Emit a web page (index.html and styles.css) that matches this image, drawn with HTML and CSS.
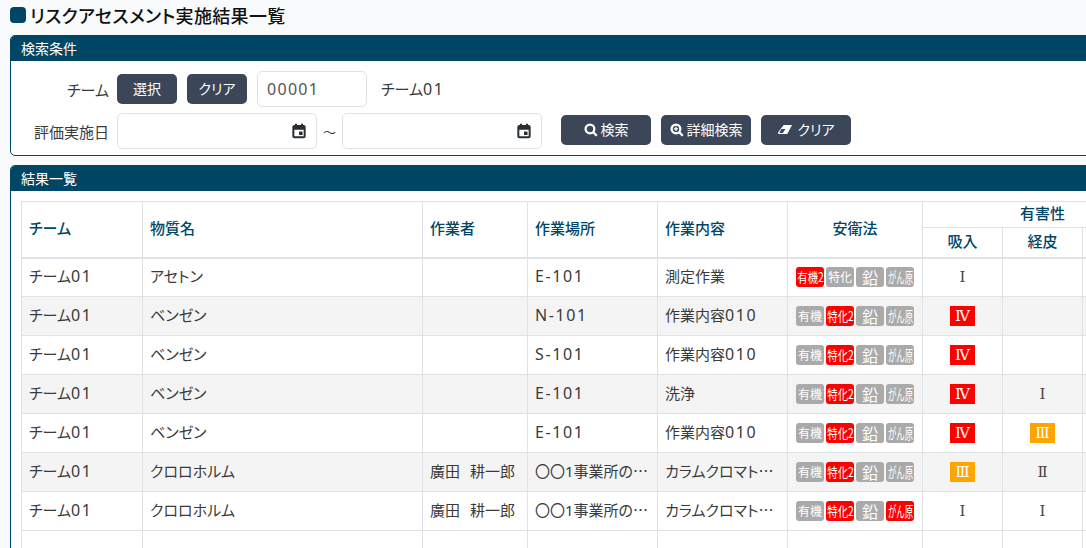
FILE: index.html
```html
<!DOCTYPE html>
<html lang="ja">
<head>
<meta charset="utf-8">
<title>リスクアセスメント実施結果一覧</title>
<link rel="stylesheet" href="styles.css">
</head>
<body>
<h1 class="title"><span class="title-mark"></span>リスクアセスメント実施結果一覧</h1>

<section class="card search-card">
  <h2 class="card-head">検索条件</h2>
  <div class="card-body search-body">
    <div class="form-row">
      <span class="label">チーム</span>
      <button class="btn btn-small">選択</button>
      <button class="btn btn-small">クリア</button>
      <input class="input input-code" value="00001">
      <span class="team-name">チーム<span class="num">01</span></span>
    </div>
    <div class="form-row row-date">
      <span class="label">評価実施日</span>
      <span class="input input-date"><svg class="cal" viewBox="0 0 24 24"><path fill-rule="evenodd" d="M5 3h1V1h3v2h6V1h3v2h1a3 3 0 0 1 3 3v14a3 3 0 0 1-3 3H5a3 3 0 0 1-3-3V6a3 3 0 0 1 3-3zm0 7v10h14V10zm7 3h5v5h-5z"/><path d="M12 13h5v5h-5z"/></svg></span>
      <span class="tilde">～</span>
      <span class="input input-date"><svg class="cal" viewBox="0 0 24 24"><path fill-rule="evenodd" d="M5 3h1V1h3v2h6V1h3v2h1a3 3 0 0 1 3 3v14a3 3 0 0 1-3 3H5a3 3 0 0 1-3-3V6a3 3 0 0 1 3-3zm0 7v10h14V10zm7 3h5v5h-5z"/><path d="M12 13h5v5h-5z"/></svg></span>
      <div class="actions">
        <button class="btn btn-wide"><svg class="ico" viewBox="0 0 16 16"><circle cx="6.8" cy="6.8" r="5" class="ico-line"/><path d="M10.4 10.4 14.6 14.6" class="ico-line"/></svg>検索</button>
        <button class="btn btn-wide"><svg class="ico" viewBox="0 0 16 16"><circle cx="6.8" cy="6.8" r="5" class="ico-line"/><path d="M10.4 10.4 14.6 14.6" class="ico-line"/><path d="M6.8 4.4v4.8M4.4 6.8h4.8" class="ico-thin"/></svg>詳細検索</button>
        <button class="btn btn-wide"><svg class="ico ico-eraser" viewBox="0 0 18 14"><path d="M7.5 1.5H17L11.5 11.5H1.5L1 10z" class="ico-fill"/><path d="M5 6 9.5 6 6.5 10.5H2.6z" class="ico-cut"/></svg>クリア</button>
      </div>
    </div>
  </div>
</section>

<section class="card result-card">
  <h2 class="card-head">結果一覧</h2>
  <div class="card-body result-body">
    <table class="grid">
      <colgroup>
        <col class="c-team"><col class="c-name"><col class="c-worker"><col class="c-place"><col class="c-work"><col class="c-law"><col class="c-haz"><col class="c-haz"><col class="c-haz">
      </colgroup>
      <thead>
        <tr class="head-top">
          <th rowspan="2">チーム</th>
          <th rowspan="2">物質名</th>
          <th rowspan="2">作業者</th>
          <th rowspan="2">作業場所</th>
          <th rowspan="2">作業内容</th>
          <th rowspan="2" class="center">安衛法</th>
          <th colspan="3" class="center hazard-head">有害性</th>
        </tr>
        <tr class="head-sub">
          <th class="center">吸入</th>
          <th class="center">経皮</th>
          <th class="center"></th>
        </tr>
      </thead>
      <tbody>
        <tr>
          <td>チーム<span class="num">01</span></td><td>アセトン</td><td></td><td><span class="num">E-101</span></td><td>測定作業</td>
          <td class="badges"><span class="bdg on"><span class="fit">有機2</span></span><span class="bdg">特化</span><span class="bdg big">鉛</span><span class="bdg narrow"><span class="squeeze">がん原</span></span></td>
          <td class="center"><span class="rank">Ⅰ</span></td><td></td><td></td>
        </tr>
        <tr>
          <td>チーム<span class="num">01</span></td><td>ベンゼン</td><td></td><td><span class="num">N-101</span></td><td>作業内容<span class="num">010</span></td>
          <td class="badges"><span class="bdg">有機</span><span class="bdg on"><span class="fit">特化2</span></span><span class="bdg big">鉛</span><span class="bdg narrow"><span class="squeeze">がん原</span></span></td>
          <td class="center"><span class="rank red">Ⅳ</span></td><td></td><td></td>
        </tr>
        <tr>
          <td>チーム<span class="num">01</span></td><td>ベンゼン</td><td></td><td><span class="num">S-101</span></td><td>作業内容<span class="num">010</span></td>
          <td class="badges"><span class="bdg">有機</span><span class="bdg on"><span class="fit">特化2</span></span><span class="bdg big">鉛</span><span class="bdg narrow"><span class="squeeze">がん原</span></span></td>
          <td class="center"><span class="rank red">Ⅳ</span></td><td></td><td></td>
        </tr>
        <tr>
          <td>チーム<span class="num">01</span></td><td>ベンゼン</td><td></td><td><span class="num">E-101</span></td><td>洗浄</td>
          <td class="badges"><span class="bdg">有機</span><span class="bdg on"><span class="fit">特化2</span></span><span class="bdg big">鉛</span><span class="bdg narrow"><span class="squeeze">がん原</span></span></td>
          <td class="center"><span class="rank red">Ⅳ</span></td><td class="center"><span class="rank">Ⅰ</span></td><td></td>
        </tr>
        <tr>
          <td>チーム<span class="num">01</span></td><td>ベンゼン</td><td></td><td><span class="num">E-101</span></td><td>作業内容<span class="num">010</span></td>
          <td class="badges"><span class="bdg">有機</span><span class="bdg on"><span class="fit">特化2</span></span><span class="bdg big">鉛</span><span class="bdg narrow"><span class="squeeze">がん原</span></span></td>
          <td class="center"><span class="rank red">Ⅳ</span></td><td class="center"><span class="rank orange">Ⅲ</span></td><td></td>
        </tr>
        <tr>
          <td>チーム<span class="num">01</span></td><td>クロロホルム</td><td>廣田<span class="gap"></span>耕一郎</td><td class="clip">〇〇<span class="num">1</span>事業所の工場</td><td class="clip">カラムクロマトグラフィー</td>
          <td class="badges"><span class="bdg">有機</span><span class="bdg on"><span class="fit">特化2</span></span><span class="bdg big">鉛</span><span class="bdg narrow"><span class="squeeze">がん原</span></span></td>
          <td class="center"><span class="rank orange">Ⅲ</span></td><td class="center"><span class="rank">Ⅱ</span></td><td></td>
        </tr>
        <tr>
          <td>チーム<span class="num">01</span></td><td>クロロホルム</td><td>廣田<span class="gap"></span>耕一郎</td><td class="clip">〇〇<span class="num">1</span>事業所の工場</td><td class="clip">カラムクロマトグラフィー</td>
          <td class="badges"><span class="bdg">有機</span><span class="bdg on"><span class="fit">特化2</span></span><span class="bdg big">鉛</span><span class="bdg narrow on"><span class="squeeze">がん原</span></span></td>
          <td class="center"><span class="rank">Ⅰ</span></td><td class="center"><span class="rank">Ⅰ</span></td><td></td>
        </tr>
        <tr class="blank">
          <td>&nbsp;</td><td></td><td></td><td></td><td></td><td></td><td></td><td></td><td></td>
        </tr>
      </tbody>
    </table>
  </div>
</section>
</body>
</html>
```

FILE: styles.css
```css
html, body {
  margin: 0;
  height: 548px;
  overflow: hidden;
}
body {
  width: 1086px;
  background: #f8fafc;
  color: #3a3a3a;
  font-family: "Noto Sans CJK JP", "Noto Sans", sans-serif;
  font-feature-settings: "palt";
  font-size: 15px;
  padding: 0 0 0 10px;
  box-sizing: border-box;
}
.num {
  font-family: "Noto Sans", sans-serif;
  font-size: 16px;
  line-height: 1;
  letter-spacing: 1.6px;
}
.clip .num {
  font-size: 15px;
  letter-spacing: 0;
}
.gap {
  display: inline-block;
  width: 10px;
}
.title {
  display: flex;
  align-items: center;
  height: 35px;
  margin: 0;
  font-size: 18px;
  font-weight: 500;
  line-height: 24px;
  letter-spacing: 0.35px;
  color: #111;
  padding-bottom: 5px;
  box-sizing: border-box;
}
.title-mark {
  width: 16px;
  height: 16px;
  background: #004665;
  border-radius: 4px;
  margin-right: 4px;
}
.card {
  width: 1300px;
  background: #fff;
  border: 1px solid #004665;
  border-radius: 5px;
  box-sizing: border-box;
  overflow: hidden;
}
.card-head {
  margin: 0;
  height: 25px;
  background: #004665;
  color: #fff;
  font-size: 14px;
  font-weight: 400;
  line-height: 24px;
  padding-left: 10px;
}
.search-card {
  height: 121px;
  margin-bottom: 9px;
}
.search-body {
  padding: 10px 0 0 0;
}
.form-row {
  display: flex;
  align-items: center;
  height: 36px;
}
.row-date {
  margin-top: 6px;
}
.label {
  width: 98px;
  text-align: right;
  margin-right: 8px;
  font-size: 15px;
}
.btn {
  display: inline-flex;
  align-items: center;
  justify-content: center;
  border: 0;
  border-radius: 5px;
  background: #3b4658;
  color: #fff;
  font-family: inherit;
  font-size: 14px;
  font-feature-settings: "palt";
  height: 30px;
  padding: 0 0 2px;
}
.btn-small {
  width: 60px;
  margin-right: 10px;
}
.btn-wide {
  width: 90px;
}
.input {
  box-sizing: border-box;
  background: #fff;
  border: 1px solid #dee2e6;
  border-radius: 5px;
  height: 36px;
}
.input-code {
  width: 110px;
  padding: 0 9px;
  font-family: "Noto Sans", sans-serif;
  font-size: 16px;
  letter-spacing: 1.3px;
  color: #555;
}
.team-name {
  margin-left: 14px;
  margin-top: -2px;
  font-size: 15px;
}
.input-date {
  width: 200px;
  display: flex;
  align-items: center;
  justify-content: flex-end;
  padding-right: 9px;
}
.cal {
  width: 16px;
  height: 16px;
  fill: #2a2f35;
}
.tilde {
  width: 25px;
  text-align: center;
  font-size: 13px;
}
.actions {
  display: flex;
  gap: 10px;
  margin: -2px 0 0 19px;
}
.ico {
  width: 14px;
  height: 14px;
  margin-right: 3px;
  margin-top: 2px;
}
.ico-eraser {
  width: 16px;
  margin-right: 4px;
}
.ico-line {
  fill: none;
  stroke: #fff;
  stroke-width: 2.6;
}
.ico-thin {
  fill: none;
  stroke: #fff;
  stroke-width: 1.5;
}
.ico-fill {
  fill: #fff;
}
.ico-cut {
  fill: #3b4658;
}
.result-card {
  height: 500px;
}
.result-body {
  padding: 10px;
}
.grid {
  border-collapse: collapse;
  table-layout: fixed;
  width: 1140px;
  font-size: 15px;
  background: #fff;
}
.c-team { width: 121px; }
.c-name { width: 280px; }
.c-worker { width: 105px; }
.c-place { width: 130px; }
.c-work { width: 130px; }
.c-law { width: 135px; }
.c-haz { width: 80px; }
.grid th, .grid td {
  border: 1px solid #dee2e6;
  padding: 0 7px 3px;
  box-sizing: border-box;
  line-height: 20px;
}
.grid th {
  color: #004665;
  font-size: 15px;
  font-weight: 500;
  text-align: left;
}
.grid th.center, .grid td.center {
  text-align: center;
}
.grid td.center {
  padding-bottom: 2px;
}
.head-top th { height: 26px; }
.head-sub th { height: 30px; }
.grid thead {
  border-bottom: 2px solid #dee2e6;
}
.grid tbody tr { height: 39px; }
.grid tbody tr:nth-child(even) { background: #f4f4f4; }
.grid tbody tr.blank { background: #fff; }
.clip {
  white-space: nowrap;
  overflow: hidden;
  text-overflow: ellipsis;
}
.grid td.badges {
  padding: 0 0 0 8px;
  white-space: nowrap;
  font-size: 0;
}
.bdg {
  display: inline-block;
  width: 28px;
  height: 20px;
  margin-right: 2px;
  border-radius: 3px;
  background: #aaa;
  color: #fff;
  font-size: 12px;
  line-height: 20px;
  text-align: center;
  vertical-align: middle;
  white-space: nowrap;
  font-feature-settings: normal;
}
.bdg.on { background: #f00; }
.bdg.big { font-size: 16px; }
.bdg.narrow { font-size: 15px; }
.fit {
  display: inline-block;
  width: 33px;
  margin-left: -2.5px;
  font-size: 13px;
  transform: scaleX(0.8);
}
.squeeze {
  display: inline-block;
  width: 45px;
  margin-left: -8.5px;
  transform: scaleX(0.56);
}
.rank {
  display: inline-block;
  width: 25px;
  height: 20px;
  line-height: 20px;
  font-family: "DejaVu Serif", serif;
  font-size: 15px;
  vertical-align: middle;
  color: #444;
}
.rank.red { background: #f00; color: #fff; }
.rank.orange { background: #ffa500; color: #fff; }
```
